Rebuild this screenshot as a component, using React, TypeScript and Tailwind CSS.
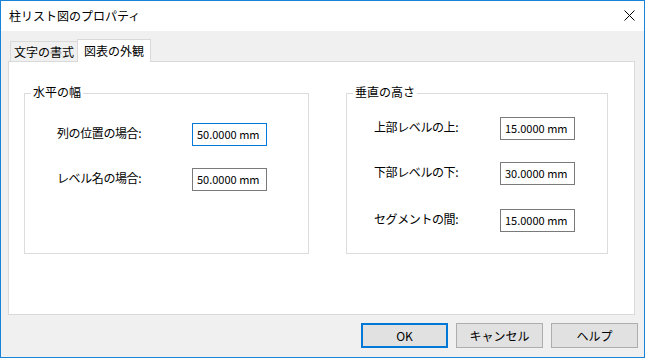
import React from 'react';

const font = "font-['Noto_Sans_CJK_JP','Noto_Sans',sans-serif]";

function Field({ value, focused }: { value: string; focused?: boolean }) {
  return (
    <div
      className={`w-[75px] h-[23px] bg-white flex items-center pl-[4px] leading-none text-[11px] ${
        focused ? 'border border-[#0078d7]' : 'border border-[#7a7a7a]'
      }`}
    >
      {value}
    </div>
  );
}

function Row({ label, value, focused, labelW }: { label: string; value: string; focused?: boolean; labelW: string }) {
  return (
    <div className="flex items-center">
      <div className={`${labelW} -mt-[3px] leading-none tracking-[-0.4px]`}>{label}</div>
      <Field value={value} focused={focused} />
    </div>
  );
}

function Group({ title, className, children }: { title: string; className: string; children: React.ReactNode }) {
  return (
    <div className={`relative border border-[#dcdcdc] h-[161px] ${className}`}>
      <span className="absolute -top-[8px] left-[6px] bg-white px-[2px] leading-none">{title}</span>
      {children}
    </div>
  );
}

export default function App() {
  return (
    <div className={`w-[645px] h-[358px] border border-[#1883d7] bg-[#f0f0f0] flex flex-col text-[12px] text-black ${font}`}>
      {/* タイトルバー */}
      <div className="h-[30px] bg-white flex items-center justify-between pl-[8px] pr-[9px]">
        <span className="leading-none -mt-[1px]">柱リスト図のプロパティ</span>
        <svg width="11" height="11" viewBox="0 0 11 11" className="-mt-[1px]">
          <path d="M0.5 0.5 L10.5 10.5 M10.5 0.5 L0.5 10.5" stroke="#000" strokeWidth="1" />
        </svg>
      </div>

      <div className="flex-1 pl-[7px] pr-[6px] pt-[8px] flex flex-col">
        {/* タブ */}
        <div className="flex items-end h-[22px] pl-[2px]">
          <div className="h-[20px] w-[68px] border border-b-0 border-[#d9d9d9] flex items-center justify-center leading-none">
            文字の書式
          </div>
          <div className="h-[23px] w-[74px] -mb-px relative z-10 bg-white border border-b-0 border-[#d9d9d9] flex items-center justify-center leading-none -ml-px">
            図表の外観
          </div>
        </div>

        {/* パネル */}
        <div className="h-[254px] w-[627px] border border-[#d9d9d9] bg-white flex items-start pt-[31px] pl-[15px]">
          <Group title="水平の幅" className="w-[285px]">
            <div className="flex flex-col gap-[22px] pl-[32px] pt-[29px]">
              <Row label="列の位置の場合:" value="50.0000 mm" focused labelW="w-[135px]" />
              <Row label="レベル名の場合:" value="50.0000 mm" labelW="w-[135px]" />
            </div>
          </Group>
          <Group title="垂直の高さ" className="w-[262px] ml-[37px]">
            <div className="flex flex-col pl-[27px] pt-[23px]">
              <Row label="上部レベルの上:" value="15.0000 mm" labelW="w-[126px]" />
              <div className="h-[22px]" />
              <Row label="下部レベルの下:" value="30.0000 mm" labelW="w-[126px]" />
              <div className="h-[24px]" />
              <Row label="セグメントの間:" value="15.0000 mm" labelW="w-[126px]" />
            </div>
          </Group>
        </div>

        {/* ボタン */}
        <div className="flex justify-end gap-[8px] mt-[8px]">
          <button className="w-[87px] h-[25px] bg-[#e1e1e1] border-2 border-[#0078d7] leading-none">OK</button>
          <button className="w-[87px] h-[25px] bg-[#e1e1e1] border border-[#adadad] leading-none">キャンセル</button>
          <button className="w-[87px] h-[25px] bg-[#e1e1e1] border border-[#adadad] leading-none">ヘルプ</button>
        </div>
      </div>
    </div>
  );
}
